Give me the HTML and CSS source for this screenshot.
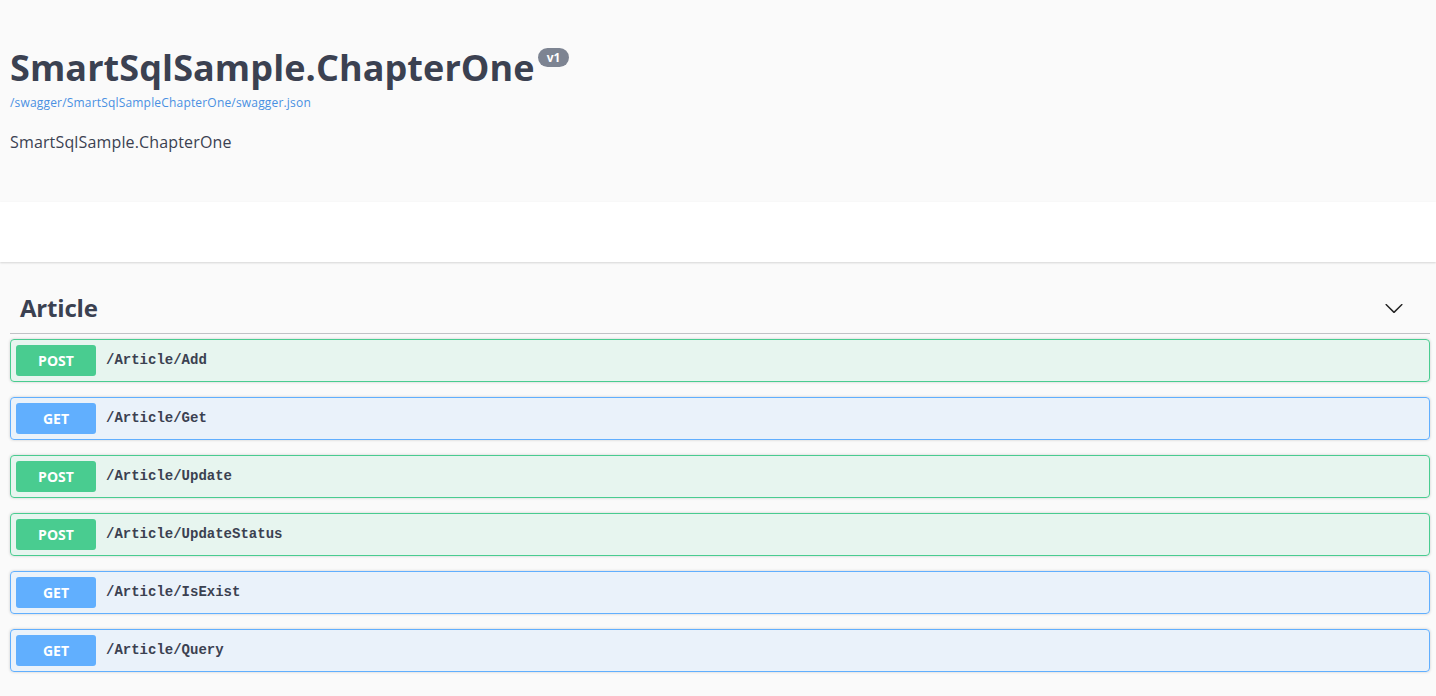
FILE: index.html
```html
<!DOCTYPE html>
<html>
<head>
<meta charset="utf-8">
<link rel="stylesheet" href="styles.css">
</head>
<body>
<div class="info wrap">
  <h2 class="title">SmartSqlSample.ChapterOne<span class="version">v1</span></h2>
  <a class="url" href="#">/swagger/SmartSqlSampleChapterOne/swagger.json</a>
  <p class="desc">SmartSqlSample.ChapterOne</p>
</div>
<div class="schemes"></div>
<div class="wrap">
  <div class="tag">
    <h4 class="tag-title"><span>Article</span>
      <svg class="arrow" width="20" height="20" viewBox="0 0 20 20"><path d="M17.418 6.109c.272-.268.709-.268.979 0s.271.701 0 .969l-7.908 7.83c-.27.268-.707.268-.979 0l-7.908-7.830c-.27-.268-.27-.701 0-.969.271-.268.709-.268.979 0L10 13.25l7.418-7.141z" fill="#222"/></svg>
    </h4>
    <div class="op post"><span class="method">POST</span><span class="path">/Article/Add</span></div>
    <div class="op get"><span class="method">GET</span><span class="path">/Article/Get</span></div>
    <div class="op post"><span class="method">POST</span><span class="path">/Article/Update</span></div>
    <div class="op post"><span class="method">POST</span><span class="path">/Article/UpdateStatus</span></div>
    <div class="op get"><span class="method">GET</span><span class="path">/Article/IsExist</span></div>
    <div class="op get"><span class="method">GET</span><span class="path">/Article/Query</span></div>
  </div>
</div>
</body>
</html>
```
FILE: styles.css
```css
html, body {
  margin: 0;
  padding: 0;
  background: #fafafa;
  font-family: "Open Sans", "Noto Sans", sans-serif;
  color: #3b4151;
}
.wrap {
  padding: 0 6px 0 10px;
}
.info {
  padding-top: 48px;
  padding-bottom: 50px;
}
.title {
  margin: 0;
  font-size: 36px;
  font-weight: 700;
  line-height: 40px;
  color: #3b4151;
  letter-spacing: 0.08px;
}
.version {
  display: inline-block;
  vertical-align: top;
  margin-left: 3px;
  background: #7d8492;
  color: #fff;
  font-size: 12px;
  font-weight: 700;
  line-height: 19px;
  padding: 0 9px;
  border-radius: 10px;
  letter-spacing: 0;
}
.url {
  display: block;
  margin-top: 7px;
  font-size: 12px;
  line-height: 16px;
  color: #4990e2;
  text-decoration: none;
  letter-spacing: 0.18px;
}
.desc {
  margin: 21px 0 0;
  font-size: 16px;
  line-height: 20px;
  color: #3b4151;
  letter-spacing: 0.15px;
}
.schemes {
  background: #fff;
  height: 60px;
  box-shadow: 0 1px 2px 0 rgba(0,0,0,.15);
  margin-bottom: 20px;
}
.tag-title {
  display: flex;
  align-items: center;
  justify-content: space-between;
  margin: 0 0 5px;
  padding: 10px 26px 10px 10px;
  font-size: 24px;
  font-weight: 700;
  line-height: 31px;
  border-bottom: 1px solid rgba(59,65,81,.3);
  letter-spacing: -0.2px;
}
.arrow {
  display: block;
}
.op {
  display: flex;
  align-items: center;
  padding: 5px;
  margin-bottom: 15px;
  border-radius: 4px;
  border: 1px solid;
  box-shadow: 0 0 3px rgba(0,0,0,.19);
}
.op.post {
  background: rgba(73,204,144,.1);
  border-color: #49cc90;
}
.op.get {
  background: rgba(97,175,254,.1);
  border-color: #61affe;
}
.method {
  width: 80px;
  text-align: center;
  color: #fff;
  font-size: 14px;
  font-weight: 700;
  line-height: 31px;
  border-radius: 3px;
  letter-spacing: 0;
}
.post .method { background: #49cc90; }
.get .method { background: #61affe; }
.path {
  padding-left: 10px;
  font-family: "Liberation Mono", monospace;
  font-size: 14px;
  font-weight: 700;
  color: #3b4151;
  line-height: 31px;
}
```
